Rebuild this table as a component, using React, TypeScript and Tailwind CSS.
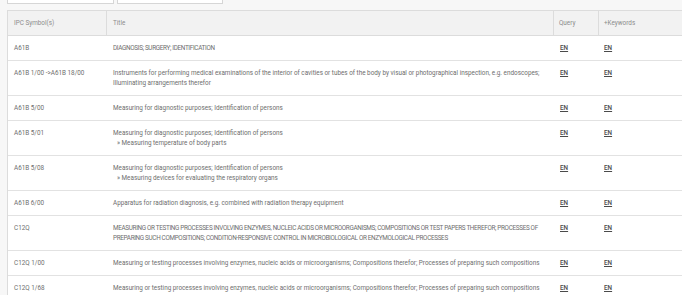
import React from 'react'

interface Row {
  symbol: string
  title: string[]
  sub?: string
  caps?: boolean
}

const rows: Row[] = [
  { symbol: 'A61B', title: ['DIAGNOSIS; SURGERY; IDENTIFICATION'], caps: true },
  {
    symbol: 'A61B 1/00 ->A61B 18/00',
    title: [
      'Instruments for performing medical examinations of the interior of cavities or tubes of the body by visual or photographical inspection, e.g. endoscopes;',
      'Illuminating arrangements therefor',
    ],
  },
  { symbol: 'A61B 5/00', title: ['Measuring for diagnostic purposes; Identification of persons'] },
  {
    symbol: 'A61B 5/01',
    title: ['Measuring for diagnostic purposes; Identification of persons'],
    sub: 'Measuring temperature of body parts',
  },
  {
    symbol: 'A61B 5/08',
    title: ['Measuring for diagnostic purposes; Identification of persons'],
    sub: 'Measuring devices for evaluating the respiratory organs',
  },
  { symbol: 'A61B 6/00', title: ['Apparatus for radiation diagnosis, e.g. combined with radiation therapy equipment'] },
  {
    symbol: 'C12Q',
    caps: true,
    title: [
      'MEASURING OR TESTING PROCESSES INVOLVING ENZYMES, NUCLEIC ACIDS OR MICROORGANISMS; COMPOSITIONS OR TEST PAPERS THEREFOR; PROCESSES OF',
      'PREPARING SUCH COMPOSITIONS; CONDITION-RESPONSIVE CONTROL IN MICROBIOLOGICAL OR ENZYMOLOGICAL PROCESSES',
    ],
  },
  {
    symbol: 'C12Q 1/00',
    title: ['Measuring or testing processes involving enzymes, nucleic acids or microorganisms; Compositions therefor; Processes of preparing such compositions'],
  },
  {
    symbol: 'C12Q 1/68',
    title: ['Measuring or testing processes involving enzymes, nucleic acids or microorganisms; Compositions therefor; Processes of preparing such compositions'],
  },
]

export default function App() {
  return (
    <div className="min-h-screen bg-[#f7f7f7] pl-[7px] text-[6.35px] text-[#6e6e6e]" style={{ fontFamily: 'Roboto, sans-serif' }}>
      {/* Search inputs (cut off at top) */}
      <div className="flex gap-[3px]">
        <div className="h-[4px] w-[107px] bg-white border-x border-b border-[#d6d6d6]" />
        <div className="h-[4px] w-[106px] bg-white border-x border-b border-[#d6d6d6]" />
      </div>

      {/* Table */}
      <div className="mt-[6px] bg-white border-l border-t border-[#dcdcdc]">
        <div className="flex h-[25px] items-center bg-[#f2f2f2] border-b border-[#dcdcdc] text-[#8c8c8c]">
          <div className="w-[99px] h-full flex items-center pl-[6px] pt-[2px] border-r border-[#dcdcdc]">IPC Symbol(s)</div>
          <div className="w-[447px] h-full flex items-center pl-[6px] pt-[2px] border-r border-[#dcdcdc]">Title</div>
          <div className="w-[45px] h-full flex items-center pl-[5px] pt-[2px] border-r border-[#dcdcdc]">Query</div>
          <div className="flex-1 h-full flex items-center pl-[5px] pt-[2px]">+Keywords</div>
        </div>
        {rows.map(r => (
          <div key={r.symbol} className="flex pt-[7px] pb-[7px] leading-[10px] border-b border-[#e2e2e2]">
            <div className="w-[99px] pl-[6px] whitespace-nowrap">{r.symbol}</div>
            <div className={`w-[447px] pl-[6px] ${r.caps ? 'tracking-[-0.32px]' : ''}`}>
              {r.title.map(t => (
                <div key={t} className="whitespace-nowrap">{t}</div>
              ))}
              {r.sub && <div className="pl-[4px] whitespace-nowrap">» {r.sub}</div>}
            </div>
            <div className="w-[45px] pl-[6px]">
              <span className="underline font-medium text-[#4a4a4a]">EN</span>
            </div>
            <div className="flex-1 pl-[5px]">
              <span className="underline font-medium text-[#4a4a4a]">EN</span>
            </div>
          </div>
        ))}
      </div>
    </div>
  )
}
